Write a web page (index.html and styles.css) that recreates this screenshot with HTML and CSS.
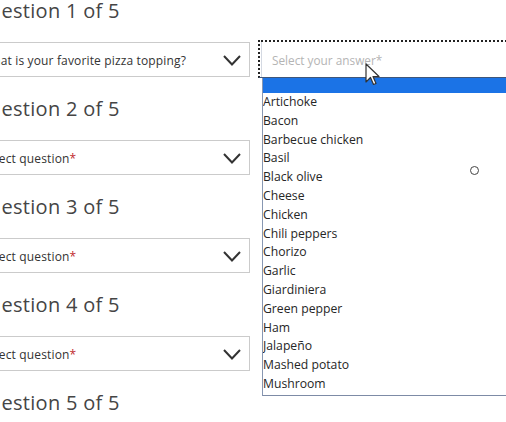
FILE: index.html
```html
<!DOCTYPE html>
<html lang="en">
<head>
<meta charset="utf-8">
<title>Security questions</title>
<link rel="stylesheet" href="styles.css">
</head>
<body>
<div class="page">
  <div class="left">
    <h2 class="q-title">Question 1 of 5</h2>
    <div class="select">
      <span class="sel-text">What is your favorite pizza topping?</span>
      <svg class="chev" width="18" height="11" viewBox="0 0 18 11"><path d="M1 1 L9 9.5 L17 1" fill="none" stroke="#333" stroke-width="2"/></svg>
    </div>
    <h2 class="q-title">Question 2 of 5</h2>
    <div class="select">
      <span class="sel-text">Select question<span class="req">*</span></span>
      <svg class="chev" width="18" height="11" viewBox="0 0 18 11"><path d="M1 1 L9 9.5 L17 1" fill="none" stroke="#333" stroke-width="2"/></svg>
    </div>
    <h2 class="q-title">Question 3 of 5</h2>
    <div class="select">
      <span class="sel-text">Select question<span class="req">*</span></span>
      <svg class="chev" width="18" height="11" viewBox="0 0 18 11"><path d="M1 1 L9 9.5 L17 1" fill="none" stroke="#333" stroke-width="2"/></svg>
    </div>
    <h2 class="q-title">Question 4 of 5</h2>
    <div class="select">
      <span class="sel-text">Select question<span class="req">*</span></span>
      <svg class="chev" width="18" height="11" viewBox="0 0 18 11"><path d="M1 1 L9 9.5 L17 1" fill="none" stroke="#333" stroke-width="2"/></svg>
    </div>
    <h2 class="q-title">Question 5 of 5</h2>
  </div>
  <div class="right">
    <div class="answer">
      <div class="answer-inner">Select your answer*</div>
    </div>
    <div class="list">
      <div class="opt blank"></div>
      <div class="opt">Artichoke</div>
      <div class="opt">Bacon</div>
      <div class="opt">Barbecue chicken</div>
      <div class="opt">Basil</div>
      <div class="opt">Black olive</div>
      <div class="opt">Cheese</div>
      <div class="opt">Chicken</div>
      <div class="opt">Chili peppers</div>
      <div class="opt">Chorizo</div>
      <div class="opt">Garlic</div>
      <div class="opt">Giardiniera</div>
      <div class="opt">Green pepper</div>
      <div class="opt">Ham</div>
      <div class="opt">Jalapeño</div>
      <div class="opt">Mashed potato</div>
      <div class="opt">Mushroom</div>
      <div class="opt">Olive</div>
    </div>
  </div>
</div>
<svg class="cursor" width="16" height="24" viewBox="0 0 16 24"><path d="M1 1 L1 19 L5.5 14.5 L8.5 21.5 L11 20.5 L8 13.5 L14 13.5 Z" fill="#fff" stroke="#333" stroke-width="1.2" stroke-linejoin="round"/></svg>
<span class="ring"></span>
</body>
</html>
```
FILE: styles.css
```css
html, body {
  margin: 0;
  padding: 0;
  background: #ffffff;
}
body {
  position: relative;
  width: 506px;
  height: 422px;
  overflow: hidden;
  font-family: "Open Sans", "Liberation Sans", sans-serif;
}
.page {
  display: flex;
  align-items: flex-start;
}
.left {
  flex: none;
  width: 277px;
  margin-left: -27px;
  display: flex;
  flex-direction: column;
}
.q-title {
  margin: 0;
  font-family: "Open Sans", sans-serif;
  font-weight: 400;
  font-size: 20px;
  line-height: 22px;
  letter-spacing: 0.3px;
  color: #454545;
  white-space: nowrap;
}
.select {
  box-sizing: border-box;
  height: 35px;
  margin: 20px 0 21px;
  border: 1px solid #cbcbcb;
  background: #fff;
  display: flex;
  align-items: center;
  justify-content: space-between;
  padding: 1px 8px 0 8px;
  font-size: 12px;
  letter-spacing: 0.15px;
  color: #333;
  white-space: nowrap;
}
.req {
  color: #c0282d;
}
.chev {
  display: block;
  flex: none;
}
.right {
  flex: none;
  width: 260px;
  margin-left: 8px;
  margin-top: 40px;
}
.answer {
  box-sizing: border-box;
  height: 38px;
  border-top: 2px dotted #222;
  border-left: 2px dotted #222;
  border-bottom: 1px solid #40577a;
  background: #fff;
}
.answer-inner {
  height: 100%;
  box-sizing: border-box;
  margin-left: 1px;
  border-left: 1px solid #d4d9e2;
  padding-left: 10px;
  display: flex;
  align-items: center;
  font-size: 11.8px;
  color: #b4b4b4;
  white-space: nowrap;
}
.list {
  box-sizing: content-box;
  margin-left: 4px;
  height: 317px;
  overflow: hidden;
  border-left: 1px solid #8797b2;
  border-bottom: 1px solid #7d8ba6;
  background: #fff;
}
.opt {
  font-size: 12.2px;
  line-height: 18.8px;
  height: 18.8px;
  color: #262626;
  white-space: nowrap;
}
.opt.blank {
  height: 15px;
  background: #1b73e6;
}
.cursor {
  position: absolute;
  left: 365px;
  top: 63px;
}
.ring {
  position: absolute;
  left: 470px;
  top: 166px;
  width: 7px;
  height: 7px;
  border: 1px solid #444;
  border-radius: 50%;
}
```
